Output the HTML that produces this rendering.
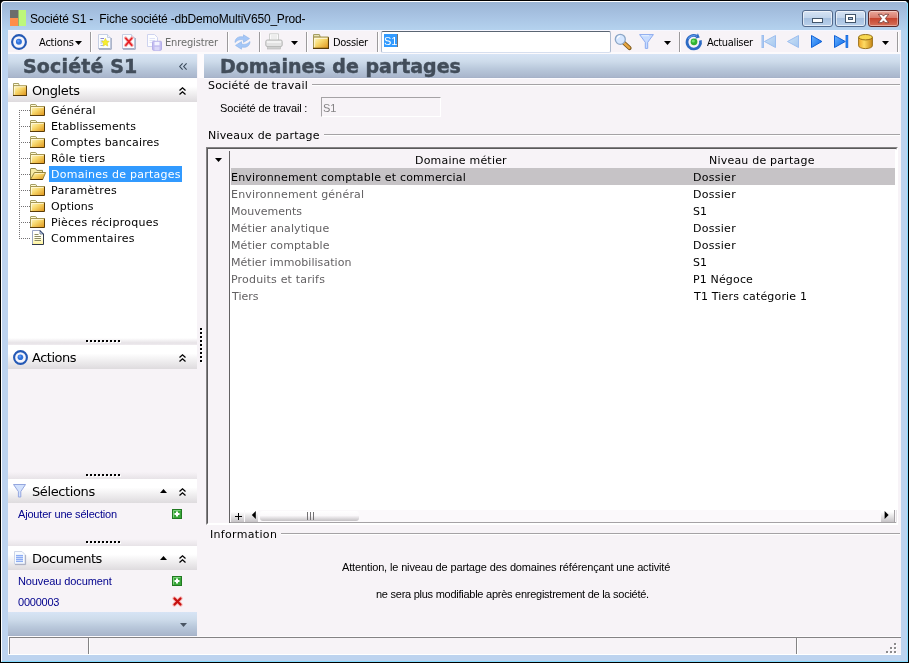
<!DOCTYPE html>
<html lang="fr">
<head>
<meta charset="utf-8">
<title>Société S1 - Fiche société</title>
<style>
html,body{margin:0;padding:0;}
body{width:909px;height:663px;overflow:hidden;background:#000;position:relative;font-family:"DejaVu Sans","Liberation Sans",sans-serif;font-size:11px;color:#000;}
.a{position:absolute;}
svg.a{overflow:visible;}
.t{position:absolute;white-space:nowrap;will-change:transform;}
</style>
</head>
<body>
<svg width="0" height="0" style="position:absolute">
<defs>
<linearGradient id="gf" x1="0" y1="0" x2="1" y2="1"><stop offset="0" stop-color="#fffbce"/><stop offset=".45" stop-color="#f7d76b"/><stop offset="1" stop-color="#de9218"/></linearGradient>
<linearGradient id="gdoc" x1="0" y1="0" x2="0" y2="1"><stop offset="0" stop-color="#fff"/><stop offset=".5" stop-color="#fffff0"/><stop offset="1" stop-color="#fff394"/></linearGradient>
<linearGradient id="gb" x1="0" y1="0" x2="1" y2="1"><stop offset="0" stop-color="#6bb2ff"/><stop offset="1" stop-color="#0869e7"/></linearGradient>
<linearGradient id="gbd" x1="0" y1="0" x2="1" y2="1"><stop offset="0" stop-color="#cee3f7"/><stop offset="1" stop-color="#a5c7ef"/></linearGradient>
</defs>
</svg>
<div class="a" style="left:0;top:0;width:909px;height:663px;box-sizing:border-box;border:1px solid #000;border-radius:5px 5px 0 0;background:linear-gradient(#9cb6d6 2px,#a8c3e3 15px,#b5d3ef 30px,#bdd3ef 56px,#bdd3ef 100%);"></div>
<div class="a" style="left:1px;top:1px;width:907px;height:661px;box-sizing:border-box;border:1px solid #fff;border-right-color:#84dbff;border-bottom-color:#84dbff;border-radius:4px 4px 0 0;"></div>
<svg class="a" style="left:10px;top:10px" width="16" height="16" viewBox="0 0 16 16"><rect width="8" height="8" fill="#6b6d6b"/><rect y="8" width="8" height="8" fill="#ff8e4a"/><rect x="8" width="8" height="16" fill="#bdf77b"/><rect x="8" width="1" height="16" fill="#84966b" opacity=".7"/></svg>
<div class="a" style="left:802px;top:10px;width:31px;height:17px;box-sizing:border-box;border:1px solid #52698c;border-radius:3px;background:linear-gradient(#d6e3f4 0%,#c2d5ec 45%,#a6c0e0 50%,#b9d0ea 100%);box-shadow:inset 0 0 0 1px rgba(255,255,255,.6);"></div>
<div class="a" style="left:835px;top:10px;width:31px;height:17px;box-sizing:border-box;border:1px solid #52698c;border-radius:3px;background:linear-gradient(#d6e3f4 0%,#c2d5ec 45%,#a6c0e0 50%,#b9d0ea 100%);box-shadow:inset 0 0 0 1px rgba(255,255,255,.6);"></div>
<div class="a" style="left:868px;top:10px;width:31px;height:17px;box-sizing:border-box;border:1px solid #5a2829;border-radius:3px;background:linear-gradient(#eaa99c 0%,#d97c6d 45%,#c6452f 50%,#d6705a 100%);box-shadow:inset 0 0 0 1px rgba(255,255,255,.4);"></div>
<svg class="a" style="left:802px;top:10px" width="97" height="17" viewBox="0 0 97 17"><rect x="10.5" y="8.5" width="10" height="4" fill="#fff" stroke="#42556b"/><rect x="43.5" y="4.5" width="10" height="8" fill="#fff" stroke="#42556b"/><rect x="46.5" y="7.5" width="4" height="2" fill="#a5bcd9" stroke="#42556b"/><path d="M76.300 4.300H80L81.500 6.200L83 4.300H86.700L83.400 8.500L86.700 12.700H83L81.500 10.800L80 12.700H76.300L79.600 8.500Z" fill="#fff" stroke="#6b3029" stroke-width=".8" stroke-linejoin="round"/></svg>
<div class="a" style="left:8px;top:30px;width:893px;height:625px;background:#f7f3f7;"></div>
<div class="a" style="left:8px;top:30px;width:893px;height:1px;background:#f7f7ff;"></div>
<div class="a" style="left:8px;top:52px;width:893px;height:2px;background:#fcfafc;"></div>
<svg class="a" style="left:11px;top:34px" width="16" height="16" viewBox="0 0 16 16"><circle cx="8" cy="8" r="6.9" fill="#f5f5fc" stroke="#2459b5" stroke-width="2.100"/><circle cx="7.9" cy="7.8" r="3.00" fill="#3173d9"/><circle cx="7.3" cy="7.1" r="1.36" fill="#5a96f7"/></svg>
<svg class="a" style="left:75px;top:41px" width="7" height="4" viewBox="0 0 7 4" preserveAspectRatio="none"><path d="M0 0H7L3.5 4Z" fill="#000"/></svg>
<div class="a" style="left:90px;top:32px;width:1px;height:20px;background:#9c9a9c;"></div><div class="a" style="left:91px;top:32px;width:1px;height:20px;background:#fff;"></div>
<svg class="a" style="left:98px;top:34px" width="14" height="16" viewBox="0 0 14 16"><path d="M.5 .5H9.5L12.5 3.5V14.5H.5Z" fill="#fbfdff" stroke="#c6cfe3"/> <path d="M9.5 .5V3.5H12.5" fill="#eef3fb" stroke="#c6cfe3"/> <path d="M1 15.300H13.300V4" fill="none" stroke="#9ca6bd"/><path d="M.5 14.500H12.500" stroke="#a5aec6"/><path d="M2.500 4.500H6" stroke="#8c8ace"/><path d="M2.500 7H5M2.500 9H4.500M2.500 11.500H5" stroke="#9cb2ef"/><path d="M7.400 4.400L8.600 7L11.200 7.300L9.300 9.200L9.800 12.100L7.400 10.700L5 12.100L5.500 9.200L3.600 7.300L6.200 7Z" fill="#f7ef31" stroke="#d6c618" stroke-width=".5"/></svg>
<svg class="a" style="left:122px;top:34px" width="14" height="16" viewBox="0 0 14 16"><path d="M.5 .5H9.5L12.5 3.5V14.5H.5Z" fill="#fbfdff" stroke="#c6cfe3"/> <path d="M9.5 .5V3.5H12.5" fill="#eef3fb" stroke="#c6cfe3"/> <path d="M1 15.300H13.300V4" fill="none" stroke="#9ca6bd"/><path d="M.5 14.500H12.500" stroke="#a5aec6"/><path d="M3.600 4L10 11.400M10 4L3.600 11.400" stroke="#f3a5a5" stroke-width="3.200" stroke-linecap="round"/><path d="M3.800 4.200L9.800 11.200M9.800 4.200L3.800 11.200" stroke="#e71c21" stroke-width="1.500" stroke-linecap="round"/></svg>
<svg class="a" style="left:146px;top:34px" width="16" height="16" viewBox="0 0 16 16"><path d="M1.5 .5H8.5L11.5 3.5V12.5H1.5Z" fill="#fdfdff" stroke="#ced3ef"/><path d="M3.5 4.5H9M3.5 6.5H9M3.5 8.5H7" stroke="#dee3f7"/><rect x="6.500" y="7.300" width="9" height="9" rx="1" fill="#c3bdf0" stroke="#b5aee9"/><rect x="8.500" y="7.800" width="5" height="3.500" fill="#f3f3ff"/><rect x="8.500" y="12.800" width="5" height="3.500" fill="#dad7f8"/></svg>
<div class="a" style="left:227px;top:32px;width:1px;height:20px;background:#9c9a9c;"></div><div class="a" style="left:228px;top:32px;width:1px;height:20px;background:#fff;"></div>
<svg class="a" style="left:234px;top:34px" width="17" height="16" viewBox="0 0 17 16"><path d="M1 8.5C1 4 5 1.8 9.5 3V.8L15.5 4.6L9.5 8.4V6C6 5 3.5 6 1 8.5Z" fill="#a5c7f7" stroke="#8cb2e7" stroke-width=".6"/><path d="M16 7.5C16 12 12 14.2 7.5 13V15.2L1.5 11.4L7.5 7.6V10C11 11 13.500 10 16 7.500Z" fill="#a5c7f7" stroke="#8cb2e7" stroke-width=".6"/></svg>
<div class="a" style="left:259px;top:32px;width:1px;height:20px;background:#9c9a9c;"></div><div class="a" style="left:260px;top:32px;width:1px;height:20px;background:#fff;"></div>
<svg class="a" style="left:265px;top:33px" width="18" height="17" viewBox="0 0 18 17"><path d="M4.5 7V.8H13.5V7" fill="#fbfbfb" stroke="#cecfce"/><path d="M6 3H12M6 5H12" stroke="#e0e0e0"/><rect x=".8" y="7" width="16.4" height="6.500" rx="1.5" fill="#e3e3e3" stroke="#b5b6b5"/><rect x="2" y="8.2" width="14" height="1.600" fill="#f7f7f7"/><rect x="2.5" y="13.5" width="13" height="2.500" fill="#cfcfcf" stroke="#b5b6b5" stroke-width=".6"/></svg>
<svg class="a" style="left:291px;top:41px" width="7" height="4" viewBox="0 0 7 4" preserveAspectRatio="none"><path d="M0 0H7L3.5 4Z" fill="#000"/></svg>
<div class="a" style="left:306px;top:32px;width:1px;height:20px;background:#9c9a9c;"></div><div class="a" style="left:307px;top:32px;width:1px;height:20px;background:#fff;"></div>
<svg class="a" style="left:313px;top:34px" width="16" height="15" viewBox="0 0 15 12" preserveAspectRatio="none"><path d="M.5 2.500V1Q.5 .5 1 .5H5.500Q6 .5 6.200 1L6.800 2.500Z" fill="#fffbd6" stroke="#a59e63"/><rect x=".5" y="2.500" width="14" height="9" fill="url(#gf)"/><path d="M.5 11.500V2.500H14.500" fill="none" stroke="#a59652"/><path d="M0 11.500H14.500V2.500" fill="none" stroke="#5a3c08"/><path d="M1.500 10.500V3.500H13.500" fill="none" stroke="#fffbe7" opacity=".7"/></svg>
<div class="a" style="left:377px;top:32px;width:1px;height:20px;background:#9c9a9c;"></div><div class="a" style="left:378px;top:32px;width:1px;height:20px;background:#fff;"></div>
<div class="a" style="left:381px;top:31px;width:230px;height:22px;box-sizing:border-box;border:1px solid;border-color:#5a6573 #adbace #d6dfef #adbace;border-radius:2px;background:#fff;"></div>
<div class="a" style="left:384px;top:34px;width:13px;height:13px;background:#319aff;"></div>
<div class="a" style="left:397px;top:34px;width:1px;height:13px;background:#737173;"></div>
<svg class="a" style="left:614px;top:33px" width="18" height="17" viewBox="0 0 18 17"><path d="M9.500 9.500L15.500 15" stroke="#7b5518" stroke-width="4.200" stroke-linecap="round"/><path d="M9.500 9.500L15.300 14.800" stroke="#e7a642" stroke-width="2.500" stroke-linecap="round"/><circle cx="6.300" cy="6.300" r="5" fill="#d6e7ff" stroke="#8ca6c6" stroke-width="1.300"/><path d="M3.300 5.500A3.200 3.200 0 0 1 6 3" fill="none" stroke="#fff" stroke-width="1.200"/></svg>
<svg class="a" style="left:639px;top:34px" width="15" height="15" viewBox="0 0 15 15"><path d="M.6 .6H14.400L8.700 8.300V14.400H6.300V8.300Z" fill="#c6dbff" stroke="#8caaef" stroke-linejoin="round"/><path d="M2.500 1.700H10" stroke="#e7f3ff"/></svg>
<svg class="a" style="left:664px;top:41px" width="7" height="4" viewBox="0 0 7 4" preserveAspectRatio="none"><path d="M0 0H7L3.5 4Z" fill="#000"/></svg>
<div class="a" style="left:679px;top:32px;width:1px;height:20px;background:#9c9a9c;"></div><div class="a" style="left:680px;top:32px;width:1px;height:20px;background:#fff;"></div>
<svg class="a" style="left:685px;top:33px" width="18" height="18" viewBox="0 0 18 18"><path d="M15.370 7.440A6.800 6.800 0 1 1 11.670 3.040" fill="none" stroke="#2d6bc4" stroke-width="2.700"/><path d="M12.900 .3L14.700 4.500L10.300 5.800Z" fill="#2d6bc4"/><path d="M3.300 6A6.800 6.800 0 0 1 10.500 2.700" fill="none" stroke="#5a96e7" stroke-width="1.200"/><circle cx="9" cy="8.800" r="3.400" fill="#31b231"/><circle cx="8.300" cy="8" r="1.600" fill="#6be36b"/></svg>
<svg class="a" style="left:761px;top:35px" width="15" height="13" viewBox="0 0 15 13"><rect x="1" y=".5" width="1.500" height="12" fill="#b5cfef" stroke="#9cbeef"/><path d="M14.500 .5V12.500L3.500 6.500Z" fill="url(#gbd)" stroke="#9cbeef"/></svg>
<svg class="a" style="left:787px;top:35px" width="12" height="13" viewBox="0 0 12 13"><path d="M11.500 .5V12.500L.5 6.500Z" fill="url(#gbd)" stroke="#9cbeef"/></svg>
<svg class="a" style="left:811px;top:35px" width="12" height="13" viewBox="0 0 12 13"><path d="M.5 .5V12.500L10.900 6.500Z" fill="url(#gb)" stroke="#1061d6"/></svg>
<svg class="a" style="left:834px;top:35px" width="15" height="13" viewBox="0 0 15 13"><path d="M.5 .5V12.500L11.300 6.500Z" fill="url(#gb)" stroke="#1061d6"/><rect x="12" y=".5" width="1.800" height="12" fill="#298aff" stroke="#1061d6" stroke-width=".8"/></svg>
<svg class="a" style="left:858px;top:34px" width="15" height="15" viewBox="0 0 15 15"><defs><linearGradient id="gcy" x1="0" y1="0" x2="1" y2="0"><stop offset="0" stop-color="#efa629"/><stop offset=".4" stop-color="#ffdb63"/><stop offset="1" stop-color="#c68618"/></linearGradient></defs><path d="M.6 3.200V11.800A6.900 2.800 0 0 0 14.400 11.800V3.200Z" fill="url(#gcy)" stroke="#94690f" stroke-width=".9"/><ellipse cx="7.500" cy="3.200" rx="6.900" ry="2.700" fill="#f7d752" stroke="#8c6510" stroke-width=".9"/></svg>
<svg class="a" style="left:882px;top:41px" width="7" height="4" viewBox="0 0 7 4" preserveAspectRatio="none"><path d="M0 0H7L3.5 4Z" fill="#000"/></svg>
<div class="a" style="left:897px;top:32px;width:1px;height:20px;background:#9c9a9c;"></div><div class="a" style="left:898px;top:32px;width:1px;height:20px;background:#fff;"></div>
<div class="a" style="left:8px;top:54px;width:189px;height:24px;background:linear-gradient(#d7e4f5 0%,#cedceb 30%,#b9c8db 62%,#a9b6cc 96%,#a3adc4 100%);"></div>
<svg class="a" style="left:179px;top:63px" width="8" height="7" viewBox="0 0 8 7"><path d="M3.600 .3L.7 3.500L3.600 6.700M7.600 .3L4.700 3.500L7.600 6.700" fill="none" stroke="#3a4a5a" stroke-width="1.100"/></svg>
<div class="a" style="left:8px;top:78px;width:189px;height:260px;background:#fff;"></div>
<div class="a" style="left:8px;top:78px;width:189px;height:24px;background:linear-gradient(#fff 0%,#fff 35%,#dedbde 100%);"></div>
<svg class="a" style="left:13px;top:83px" width="14" height="13" viewBox="0 0 15 12" preserveAspectRatio="none"><path d="M.5 2.500V1Q.5 .5 1 .5H5.500Q6 .5 6.200 1L6.800 2.500Z" fill="#fffbd6" stroke="#a59e63"/><rect x=".5" y="2.500" width="14" height="9" fill="url(#gf)"/><path d="M.5 11.500V2.500H14.500" fill="none" stroke="#a59652"/><path d="M0 11.500H14.500V2.500" fill="none" stroke="#5a3c08"/><path d="M1.500 10.500V3.500H13.500" fill="none" stroke="#fffbe7" opacity=".7"/></svg>
<svg class="a" style="left:179px;top:87px" width="7" height="8" viewBox="0 0 7 8" preserveAspectRatio="none"><path d="M.5 3.5L3.5 .8L6.5 3.5M.5 7.5L3.5 4.8L6.5 7.5" fill="none" stroke="#000" stroke-width="1.25"/></svg>
<div class="a" style="left:19px;top:110px;width:1px;height:129px;background:repeating-linear-gradient(180deg,#737173 0,#737173 1px,transparent 1px,transparent 2px);"></div>
<div class="a" style="left:21px;top:110px;width:9px;height:1px;background:repeating-linear-gradient(90deg,#737173 0,#737173 1px,transparent 1px,transparent 2px);"></div>
<svg class="a" style="left:30px;top:104px" width="15" height="12" viewBox="0 0 15 12" preserveAspectRatio="none"><path d="M.5 2.500V1Q.5 .5 1 .5H5.500Q6 .5 6.200 1L6.800 2.500Z" fill="#fffbd6" stroke="#a59e63"/><rect x=".5" y="2.500" width="14" height="9" fill="url(#gf)"/><path d="M.5 11.500V2.500H14.500" fill="none" stroke="#a59652"/><path d="M0 11.500H14.500V2.500" fill="none" stroke="#5a3c08"/><path d="M1.500 10.500V3.500H13.500" fill="none" stroke="#fffbe7" opacity=".7"/></svg>
<div class="a" style="left:21px;top:126px;width:9px;height:1px;background:repeating-linear-gradient(90deg,#737173 0,#737173 1px,transparent 1px,transparent 2px);"></div>
<svg class="a" style="left:30px;top:120px" width="15" height="12" viewBox="0 0 15 12" preserveAspectRatio="none"><path d="M.5 2.500V1Q.5 .5 1 .5H5.500Q6 .5 6.200 1L6.800 2.500Z" fill="#fffbd6" stroke="#a59e63"/><rect x=".5" y="2.500" width="14" height="9" fill="url(#gf)"/><path d="M.5 11.500V2.500H14.500" fill="none" stroke="#a59652"/><path d="M0 11.500H14.500V2.500" fill="none" stroke="#5a3c08"/><path d="M1.500 10.500V3.500H13.500" fill="none" stroke="#fffbe7" opacity=".7"/></svg>
<div class="a" style="left:21px;top:142px;width:9px;height:1px;background:repeating-linear-gradient(90deg,#737173 0,#737173 1px,transparent 1px,transparent 2px);"></div>
<svg class="a" style="left:30px;top:136px" width="15" height="12" viewBox="0 0 15 12" preserveAspectRatio="none"><path d="M.5 2.500V1Q.5 .5 1 .5H5.500Q6 .5 6.200 1L6.800 2.500Z" fill="#fffbd6" stroke="#a59e63"/><rect x=".5" y="2.500" width="14" height="9" fill="url(#gf)"/><path d="M.5 11.500V2.500H14.500" fill="none" stroke="#a59652"/><path d="M0 11.500H14.500V2.500" fill="none" stroke="#5a3c08"/><path d="M1.500 10.500V3.500H13.500" fill="none" stroke="#fffbe7" opacity=".7"/></svg>
<div class="a" style="left:21px;top:158px;width:9px;height:1px;background:repeating-linear-gradient(90deg,#737173 0,#737173 1px,transparent 1px,transparent 2px);"></div>
<svg class="a" style="left:30px;top:152px" width="15" height="12" viewBox="0 0 15 12" preserveAspectRatio="none"><path d="M.5 2.500V1Q.5 .5 1 .5H5.500Q6 .5 6.200 1L6.800 2.500Z" fill="#fffbd6" stroke="#a59e63"/><rect x=".5" y="2.500" width="14" height="9" fill="url(#gf)"/><path d="M.5 11.500V2.500H14.500" fill="none" stroke="#a59652"/><path d="M0 11.500H14.500V2.500" fill="none" stroke="#5a3c08"/><path d="M1.500 10.500V3.500H13.500" fill="none" stroke="#fffbe7" opacity=".7"/></svg>
<div class="a" style="left:21px;top:174px;width:9px;height:1px;background:repeating-linear-gradient(90deg,#737173 0,#737173 1px,transparent 1px,transparent 2px);"></div>
<div class="a" style="left:49px;top:166px;width:133px;height:16px;background:#319aff;"></div>
<svg class="a" style="left:30px;top:168px" width="16" height="12" viewBox="0 0 16 12" preserveAspectRatio="none"><path d="M.5 11V1Q.5 .5 1 .5H5.500L6.800 2.400H12.500V4.500" fill="#f7eba5" stroke="#948a4a"/><path d="M4.400 4.500H15.600L12.700 11.500H.5Z" fill="url(#gf)" stroke="#8c7a31" stroke-width=".9"/><path d="M.3 11.500H12.700" fill="none" stroke="#4a3008"/><path d="M5.200 5.500H14.300" fill="none" stroke="#fffbe7" opacity=".6"/></svg>
<div class="a" style="left:21px;top:190px;width:9px;height:1px;background:repeating-linear-gradient(90deg,#737173 0,#737173 1px,transparent 1px,transparent 2px);"></div>
<svg class="a" style="left:30px;top:184px" width="15" height="12" viewBox="0 0 15 12" preserveAspectRatio="none"><path d="M.5 2.500V1Q.5 .5 1 .5H5.500Q6 .5 6.200 1L6.800 2.500Z" fill="#fffbd6" stroke="#a59e63"/><rect x=".5" y="2.500" width="14" height="9" fill="url(#gf)"/><path d="M.5 11.500V2.500H14.500" fill="none" stroke="#a59652"/><path d="M0 11.500H14.500V2.500" fill="none" stroke="#5a3c08"/><path d="M1.500 10.500V3.500H13.500" fill="none" stroke="#fffbe7" opacity=".7"/></svg>
<div class="a" style="left:21px;top:206px;width:9px;height:1px;background:repeating-linear-gradient(90deg,#737173 0,#737173 1px,transparent 1px,transparent 2px);"></div>
<svg class="a" style="left:30px;top:200px" width="15" height="12" viewBox="0 0 15 12" preserveAspectRatio="none"><path d="M.5 2.500V1Q.5 .5 1 .5H5.500Q6 .5 6.200 1L6.800 2.500Z" fill="#fffbd6" stroke="#a59e63"/><rect x=".5" y="2.500" width="14" height="9" fill="url(#gf)"/><path d="M.5 11.500V2.500H14.500" fill="none" stroke="#a59652"/><path d="M0 11.500H14.500V2.500" fill="none" stroke="#5a3c08"/><path d="M1.500 10.500V3.500H13.500" fill="none" stroke="#fffbe7" opacity=".7"/></svg>
<div class="a" style="left:21px;top:222px;width:9px;height:1px;background:repeating-linear-gradient(90deg,#737173 0,#737173 1px,transparent 1px,transparent 2px);"></div>
<svg class="a" style="left:30px;top:216px" width="15" height="12" viewBox="0 0 15 12" preserveAspectRatio="none"><path d="M.5 2.500V1Q.5 .5 1 .5H5.500Q6 .5 6.200 1L6.800 2.500Z" fill="#fffbd6" stroke="#a59e63"/><rect x=".5" y="2.500" width="14" height="9" fill="url(#gf)"/><path d="M.5 11.500V2.500H14.500" fill="none" stroke="#a59652"/><path d="M0 11.500H14.500V2.500" fill="none" stroke="#5a3c08"/><path d="M1.500 10.500V3.500H13.500" fill="none" stroke="#fffbe7" opacity=".7"/></svg>
<div class="a" style="left:21px;top:238px;width:9px;height:1px;background:repeating-linear-gradient(90deg,#737173 0,#737173 1px,transparent 1px,transparent 2px);"></div>
<svg class="a" style="left:32px;top:230px" width="12" height="15" viewBox="0 0 12 15" preserveAspectRatio="none"><path d="M.5 .5H8L11.500 4V14.500H.5Z" fill="url(#gdoc)"/><path d="M.5 14.500V.5H8" fill="none" stroke="#9ca6c6"/><path d="M0 14.500H11.500V4" fill="none" stroke="#31384a"/><path d="M8 .3L11.700 4H8Z" fill="#42598c" stroke="#31415a" stroke-width=".6"/><path d="M8.600 2.200V3.400H9.800" fill="none" stroke="#e7efff" stroke-width=".8"/><path d="M2.500 4.500H6.500M2.500 6.500H9M2.500 8.500H9M2.500 10.500H9" stroke="#8c8a63"/></svg>
<div class="a" style="left:8px;top:338px;width:189px;height:7px;background:linear-gradient(#fff,#e7e3e7 70%,#efebef);"></div>
<div class="a" style="left:87px;top:341px;width:34px;height:2px;background:repeating-linear-gradient(90deg,#fff 0,#fff 2px,transparent 2px,transparent 4px);"></div><div class="a" style="left:86px;top:340px;width:34px;height:2px;background:repeating-linear-gradient(90deg,#000 0,#000 2px,transparent 2px,transparent 4px);"></div>
<div class="a" style="left:8px;top:345px;width:189px;height:24px;background:linear-gradient(#fff 0%,#fff 35%,#dedbde 100%);"></div>
<svg class="a" style="left:12.5px;top:349.5px" width="15.0" height="15.0" viewBox="0 0 15.0 15.0"><circle cx="7.5" cy="7.5" r="6.4" fill="#f5f5fc" stroke="#2459b5" stroke-width="2.100"/><circle cx="7.4" cy="7.3" r="2.81" fill="#3173d9"/><circle cx="6.8" cy="6.6" r="1.28" fill="#5a96f7"/></svg>
<svg class="a" style="left:179px;top:354px" width="7" height="8" viewBox="0 0 7 8" preserveAspectRatio="none"><path d="M.5 3.5L3.5 .8L6.5 3.5M.5 7.5L3.5 4.8L6.5 7.5" fill="none" stroke="#000" stroke-width="1.25"/></svg>
<div class="a" style="left:8px;top:472px;width:189px;height:7px;background:linear-gradient(#f7f3f7,#e7e3e7);"></div>
<div class="a" style="left:87px;top:475px;width:34px;height:2px;background:repeating-linear-gradient(90deg,#fff 0,#fff 2px,transparent 2px,transparent 4px);"></div><div class="a" style="left:86px;top:474px;width:34px;height:2px;background:repeating-linear-gradient(90deg,#000 0,#000 2px,transparent 2px,transparent 4px);"></div>
<div class="a" style="left:8px;top:479px;width:189px;height:24px;background:linear-gradient(#fff 0%,#fff 35%,#dedbde 100%);"></div>
<svg class="a" style="left:13px;top:484px" width="13" height="14" viewBox="0 0 13 14"><path d="M.5 .5H12.500L7.800 7.500V13H5.400V7.500Z" fill="#d3e2fd" stroke="#94a6de" stroke-linejoin="round"/></svg>
<svg class="a" style="left:160px;top:489px" width="7" height="4" viewBox="0 0 7 4"><path d="M0 4H7L3.500 0Z" fill="#000"/></svg>
<svg class="a" style="left:179px;top:488px" width="7" height="8" viewBox="0 0 7 8" preserveAspectRatio="none"><path d="M.5 3.5L3.5 .8L6.5 3.5M.5 7.5L3.5 4.8L6.5 7.5" fill="none" stroke="#000" stroke-width="1.25"/></svg>
<svg class="a" style="left:172px;top:509px" width="10" height="10" viewBox="0 0 10 10" preserveAspectRatio="none"><rect x=".5" y=".5" width="9" height="9" fill="#39a639" stroke="#217921"/> <path d="M1.5 8.5V1.5H8.5" fill="none" stroke="#7bd37b"/> <path d="M5 2.5V7.5M2.5 5H7.5" stroke="#fff" stroke-width="2"/></svg>
<div class="a" style="left:8px;top:539px;width:189px;height:7px;background:linear-gradient(#f7f3f7,#e7e3e7);"></div>
<div class="a" style="left:87px;top:542px;width:34px;height:2px;background:repeating-linear-gradient(90deg,#fff 0,#fff 2px,transparent 2px,transparent 4px);"></div><div class="a" style="left:86px;top:541px;width:34px;height:2px;background:repeating-linear-gradient(90deg,#000 0,#000 2px,transparent 2px,transparent 4px);"></div>
<div class="a" style="left:8px;top:546px;width:189px;height:24px;background:linear-gradient(#fff 0%,#fff 35%,#dedbde 100%);"></div>
<svg class="a" style="left:14px;top:551px" width="12" height="14" viewBox="0 0 12 14"><path d="M.5 .5H8L11 3.500V13H.5Z" fill="#f7fbff" stroke="#ccd5e8"/><rect x="2" y="3.800" width="7" height="7.400" fill="#c9d9fb"/><path d="M2 4.500H9M2 6.500H9M2 8.500H9M2 10.500H9" stroke="#8cacf3"/><path d="M1 13.600H11.600V4" fill="none" stroke="#a9aec0"/></svg>
<svg class="a" style="left:160px;top:556px" width="7" height="4" viewBox="0 0 7 4"><path d="M0 4H7L3.500 0Z" fill="#000"/></svg>
<svg class="a" style="left:179px;top:555px" width="7" height="8" viewBox="0 0 7 8" preserveAspectRatio="none"><path d="M.5 3.5L3.5 .8L6.5 3.5M.5 7.5L3.5 4.8L6.5 7.5" fill="none" stroke="#000" stroke-width="1.25"/></svg>
<svg class="a" style="left:172px;top:576px" width="10" height="10" viewBox="0 0 10 10" preserveAspectRatio="none"><rect x=".5" y=".5" width="9" height="9" fill="#39a639" stroke="#217921"/> <path d="M1.5 8.5V1.5H8.5" fill="none" stroke="#7bd37b"/> <path d="M5 2.5V7.5M2.5 5H7.5" stroke="#fff" stroke-width="2"/></svg>
<svg class="a" style="left:172px;top:596px" width="11" height="11" viewBox="0 0 11 11" preserveAspectRatio="none"><path d="M2.300 2.300L8.700 8.700M8.700 2.300L2.300 8.700" stroke="#f7b6b5" stroke-width="4" stroke-linecap="round"/> <path d="M2.500 2.500L8.500 8.500M8.500 2.500L2.500 8.500" stroke="#c61010" stroke-width="2.200" stroke-linecap="round"/></svg>
<div class="a" style="left:8px;top:612px;width:189px;height:24px;background:linear-gradient(#d7e4f5 0%,#cedceb 30%,#b9c8db 62%,#a9b6cc 96%,#a3adc4 100%);"></div>
<svg class="a" style="left:180px;top:623px" width="7" height="4" viewBox="0 0 7 4"><path d="M0 0H7L3.500 4Z" fill="#4a5563"/></svg>
<div class="a" style="left:201px;top:329px;width:2px;height:34px;background:repeating-linear-gradient(180deg,#fff 0,#fff 2px,transparent 2px,transparent 4px);"></div>
<div class="a" style="left:200px;top:328px;width:2px;height:34px;background:repeating-linear-gradient(180deg,#000 0,#000 2px,transparent 2px,transparent 4px);"></div>
<div class="a" style="left:198px;top:54px;width:6px;height:24px;background:#fdfbfd;"></div>
<div class="a" style="left:204px;top:54px;width:696px;height:24px;background:linear-gradient(#d7e4f5 0%,#cedceb 30%,#b9c8db 62%,#a9b6cc 96%,#a3adc4 100%);"></div>
<div class="a" style="left:204px;top:78px;width:696px;height:1px;background:#fcfbfe;"></div>
<div class="a" style="left:312px;top:84px;width:588px;height:1px;background:#a5a2a5;"></div>
<div class="a" style="left:312px;top:85px;width:588px;height:1px;background:#fff;"></div>
<div class="a" style="left:324px;top:134px;width:576px;height:1px;background:#a5a2a5;"></div>
<div class="a" style="left:324px;top:135px;width:576px;height:1px;background:#fff;"></div>
<div class="a" style="left:281px;top:533px;width:619px;height:1px;background:#a5a2a5;"></div>
<div class="a" style="left:281px;top:534px;width:619px;height:1px;background:#fff;"></div>
<div class="a" style="left:321px;top:97px;width:120px;height:20px;box-sizing:border-box;border:1px solid;border-color:#a5a2a5 #fff #fff #a5a2a5;background:#f7f3f7;"></div>
<div class="a" style="left:206px;top:147px;width:692px;height:378px;box-sizing:border-box;border:1px solid;border-color:#848284 #fff #fff #848284;background:#f7f3f7;"></div>
<div class="a" style="left:207px;top:148px;width:690px;height:376px;box-sizing:border-box;border:1px solid;border-color:#5a595a #e7e3e7 #e7e3e7 #5a595a;"></div>
<div class="a" style="left:230px;top:185px;width:666px;height:325px;background:#fff;"></div>
<div class="a" style="left:895px;top:150px;width:2px;height:360px;background:#fff;"></div>
<div class="a" style="left:229px;top:151px;width:1px;height:372px;background:#636163;"></div>
<div class="a" style="left:231px;top:168px;width:664px;height:17px;background:#c6c3c6;"></div>
<svg class="a" style="left:215px;top:158px" width="7" height="4" viewBox="0 0 7 4"><path d="M0 0H7L3.500 4Z" fill="#000"/></svg>
<div class="a" style="left:230px;top:510px;width:666px;height:12px;background:#fbf9fb;"></div>
<div class="a" style="left:230px;top:522px;width:666px;height:1px;background:#a5a2a5;"></div>
<div class="a" style="left:208px;top:523px;width:689px;height:2px;background:#fff;"></div>
<div class="a" style="left:231px;top:510px;width:13px;height:12px;background:linear-gradient(#fff 15%,#c6c3c6);"></div>
<div class="a" style="left:235px;top:516px;width:7px;height:1px;background:#000;"></div>
<div class="a" style="left:238px;top:513px;width:1px;height:7px;background:#000;"></div>
<div class="a" style="left:245px;top:510px;width:13px;height:12px;background:linear-gradient(#fff 15%,#c6c3c6);"></div>
<svg class="a" style="left:251px;top:511px" width="5" height="8" viewBox="0 0 5 8"><path d="M4.800 0V8L.8 4Z" fill="#000"/></svg>
<div class="a" style="left:260px;top:511px;width:99px;height:10px;border-radius:3px;background:linear-gradient(#fff 0%,#fbf9fb 45%,#c3c0c3 100%);"></div>
<div class="a" style="left:307px;top:512px;width:1px;height:8px;background:#737173;"></div>
<div class="a" style="left:310px;top:512px;width:1px;height:8px;background:#737173;"></div>
<div class="a" style="left:313px;top:512px;width:1px;height:8px;background:#737173;"></div>
<div class="a" style="left:881px;top:510px;width:13px;height:12px;background:linear-gradient(#fff 15%,#c6c3c6);"></div>
<div class="a" style="left:894px;top:510px;width:1px;height:12px;background:#a5a2a5;"></div>
<svg class="a" style="left:884px;top:511px" width="5" height="8" viewBox="0 0 5 8"><path d="M.6 0V8L4.600 4Z" fill="#000"/></svg>
<div class="a" style="left:8px;top:636px;width:893px;height:1px;background:#fdfbfd;"></div>
<div class="a" style="left:8px;top:637px;width:893px;height:1px;background:#848284;"></div>
<div class="a" style="left:8px;top:638px;width:893px;height:17px;background:#f7f3f7;"></div>
<div class="a" style="left:8px;top:654px;width:893px;height:1px;background:#fff;"></div>
<div class="a" style="left:8px;top:637px;width:1px;height:18px;background:#fff;"></div>
<div class="a" style="left:9px;top:638px;width:1px;height:16px;background:#848284;"></div>
<div class="a" style="left:88px;top:638px;width:1px;height:16px;background:#848284;"></div>
<div class="a" style="left:89px;top:638px;width:1px;height:16px;background:#fff;"></div>
<div class="a" style="left:796px;top:638px;width:1px;height:16px;background:#848284;"></div>
<div class="a" style="left:797px;top:638px;width:1px;height:16px;background:#fff;"></div>
<svg class="a" style="left:885px;top:642px" width="12" height="12" viewBox="0 0 12 12"><rect x="10" y="2" width="2" height="2" fill="#fff"/><rect x="9" y="1" width="2" height="2" fill="#8c8a8c"/><rect x="6" y="6" width="2" height="2" fill="#fff"/><rect x="5" y="5" width="2" height="2" fill="#8c8a8c"/><rect x="10" y="6" width="2" height="2" fill="#fff"/><rect x="9" y="5" width="2" height="2" fill="#8c8a8c"/><rect x="2" y="10" width="2" height="2" fill="#fff"/><rect x="1" y="9" width="2" height="2" fill="#8c8a8c"/><rect x="6" y="10" width="2" height="2" fill="#fff"/><rect x="5" y="9" width="2" height="2" fill="#8c8a8c"/><rect x="10" y="10" width="2" height="2" fill="#fff"/><rect x="9" y="9" width="2" height="2" fill="#8c8a8c"/></svg>
<div class="t" id="wtitle" style='left:30.30px;top:11.00px;font:normal 12px/16px "Liberation Sans","DejaVu Sans",sans-serif;color:#000;letter-spacing:-0.191px;'>Société S1 -  Fiche société -dbDemoMultiV650_Prod-</div>
<div class="t" id="ltitle" style='left:23.00px;top:55.00px;font:bold 19px/23px "DejaVu Sans","Liberation Sans",sans-serif;color:#424d5a;letter-spacing:0.156px;-webkit-text-stroke:0.45px #424d5a;'>Société S1</div>
<div class="t" id="rtitle" style='left:220.00px;top:55.00px;font:bold 19px/23px "DejaVu Sans","Liberation Sans",sans-serif;color:#424d5a;-webkit-text-stroke:0.45px #424d5a;'>Domaines de partages</div>
<div class="t" id="tbact" style='left:39.00px;top:35.00px;font:normal 11px/15px "DejaVu Sans Condensed","DejaVu Sans","Liberation Sans",sans-serif;color:#000;letter-spacing:-0.198px;'>Actions</div>
<div class="t" id="tbenr" style='left:164.80px;top:35.00px;font:normal 11px/15px "DejaVu Sans Condensed","DejaVu Sans","Liberation Sans",sans-serif;color:#6b6d6b;letter-spacing:-0.140px;'>Enregistrer</div>
<div class="t" id="tbdos" style='left:332.70px;top:35.00px;font:normal 11px/15px "DejaVu Sans Condensed","DejaVu Sans","Liberation Sans",sans-serif;color:#000;letter-spacing:-0.315px;'>Dossier</div>
<div class="t" id="tbs1" style='left:384.30px;top:34.00px;font:normal 11px/15px "Liberation Sans","DejaVu Sans",sans-serif;color:#fff;'>S1</div>
<div class="t" id="tbactu" style='left:706.80px;top:35.00px;font:normal 11px/15px "DejaVu Sans Condensed","DejaVu Sans","Liberation Sans",sans-serif;color:#000;letter-spacing:-0.342px;'>Actualiser</div>
<div class="t" id="h1" style='left:31.70px;top:82.00px;font:normal 13px/17px "DejaVu Sans","Liberation Sans",sans-serif;color:#000;letter-spacing:-0.374px;'>Onglets</div>
<div class="t" id="h2" style='left:32.00px;top:349.00px;font:normal 13px/17px "DejaVu Sans","Liberation Sans",sans-serif;color:#000;letter-spacing:-0.490px;'>Actions</div>
<div class="t" id="h3" style='left:31.70px;top:483.00px;font:normal 13px/17px "DejaVu Sans","Liberation Sans",sans-serif;color:#000;letter-spacing:-0.389px;'>Sélections</div>
<div class="t" id="h4" style='left:31.70px;top:550.00px;font:normal 13px/17px "DejaVu Sans","Liberation Sans",sans-serif;color:#000;letter-spacing:-0.473px;'>Documents</div>
<div class="t" id="tr0" style='left:50.60px;top:103.00px;font:normal 11px/15px "DejaVu Sans","Liberation Sans",sans-serif;color:#000;letter-spacing:0.198px;'>Général</div>
<div class="t" id="tr1" style='left:50.60px;top:119.00px;font:normal 11px/15px "DejaVu Sans","Liberation Sans",sans-serif;color:#000;letter-spacing:0.086px;'>Etablissements</div>
<div class="t" id="tr2" style='left:50.60px;top:135.00px;font:normal 11px/15px "DejaVu Sans","Liberation Sans",sans-serif;color:#000;letter-spacing:0.157px;'>Comptes bancaires</div>
<div class="t" id="tr3" style='left:50.60px;top:151.00px;font:normal 11px/15px "DejaVu Sans","Liberation Sans",sans-serif;color:#000;letter-spacing:0.264px;'>Rôle tiers</div>
<div class="t" id="tr4" style='left:50.60px;top:167.00px;font:normal 11px/15px "DejaVu Sans","Liberation Sans",sans-serif;color:#fff;letter-spacing:0.251px;'>Domaines de partages</div>
<div class="t" id="tr5" style='left:50.60px;top:183.00px;font:normal 11px/15px "DejaVu Sans","Liberation Sans",sans-serif;color:#000;letter-spacing:0.342px;'>Paramètres</div>
<div class="t" id="tr6" style='left:50.60px;top:199.00px;font:normal 11px/15px "DejaVu Sans","Liberation Sans",sans-serif;color:#000;'>Options</div>
<div class="t" id="tr7" style='left:50.60px;top:215.00px;font:normal 11px/15px "DejaVu Sans","Liberation Sans",sans-serif;color:#000;letter-spacing:0.272px;'>Pièces réciproques</div>
<div class="t" id="tr8" style='left:50.60px;top:231.00px;font:normal 11px/15px "DejaVu Sans","Liberation Sans",sans-serif;color:#000;letter-spacing:0.280px;'>Commentaires</div>
<div class="t" id="lk1" style='left:18.40px;top:507.00px;font:normal 11px/15px "Liberation Sans","DejaVu Sans",sans-serif;color:#00008c;letter-spacing:-0.183px;'>Ajouter une sélection</div>
<div class="t" id="lk2" style='left:17.70px;top:574.00px;font:normal 11px/15px "Liberation Sans","DejaVu Sans",sans-serif;color:#00008c;letter-spacing:-0.102px;'>Nouveau document</div>
<div class="t" id="lk3" style='left:17.70px;top:595.00px;font:normal 11px/15px "Liberation Sans","DejaVu Sans",sans-serif;color:#00008c;letter-spacing:-0.222px;'>0000003</div>
<div class="t" id="g1" style='left:207.60px;top:78.00px;font:normal 11px/15px "DejaVu Sans","Liberation Sans",sans-serif;color:#000;letter-spacing:0.198px;'>Société de travail</div>
<div class="t" id="g2" style='left:207.60px;top:128.00px;font:normal 11px/15px "DejaVu Sans","Liberation Sans",sans-serif;color:#000;letter-spacing:0.173px;'>Niveaux de partage</div>
<div class="t" id="g3" style='left:210.20px;top:527.00px;font:normal 11px/15px "DejaVu Sans","Liberation Sans",sans-serif;color:#000;letter-spacing:0.322px;'>Information</div>
<div class="t" id="lab" style='left:219.60px;top:101.00px;font:normal 11px/15px "Liberation Sans","DejaVu Sans",sans-serif;color:#000;letter-spacing:-0.162px;'>Société de travail :</div>
<div class="t" id="fld" style='left:323.00px;top:101.00px;font:normal 11px/15px "Liberation Sans","DejaVu Sans",sans-serif;color:#848284;'>S1</div>
<div class="t" id="ch1" style='left:415.40px;top:153.00px;font:normal 11px/15px "DejaVu Sans","Liberation Sans",sans-serif;color:#000;letter-spacing:0.194px;'>Domaine métier</div>
<div class="t" id="ch2" style='left:709.00px;top:153.00px;font:normal 11px/15px "DejaVu Sans","Liberation Sans",sans-serif;color:#000;letter-spacing:0.210px;'>Niveau de partage</div>
<div class="t" id="a0" style='left:230.60px;top:170.00px;font:normal 11px/15px "DejaVu Sans","Liberation Sans",sans-serif;color:#000;letter-spacing:0.188px;'>Environnement comptable et commercial</div>
<div class="t" id="a1" style='left:230.60px;top:187.00px;font:normal 11px/15px "DejaVu Sans","Liberation Sans",sans-serif;color:#636163;letter-spacing:0.190px;'>Environnement général</div>
<div class="t" id="a2" style='left:230.60px;top:204.00px;font:normal 11px/15px "DejaVu Sans","Liberation Sans",sans-serif;color:#636163;'>Mouvements</div>
<div class="t" id="a3" style='left:230.60px;top:221.00px;font:normal 11px/15px "DejaVu Sans","Liberation Sans",sans-serif;color:#636163;letter-spacing:0.105px;'>Métier analytique</div>
<div class="t" id="a4" style='left:230.60px;top:238.00px;font:normal 11px/15px "DejaVu Sans","Liberation Sans",sans-serif;color:#636163;letter-spacing:0.111px;'>Métier comptable</div>
<div class="t" id="a5" style='left:230.60px;top:255.00px;font:normal 11px/15px "DejaVu Sans","Liberation Sans",sans-serif;color:#636163;letter-spacing:0.056px;'>Métier immobilisation</div>
<div class="t" id="a6" style='left:230.60px;top:272.00px;font:normal 11px/15px "DejaVu Sans","Liberation Sans",sans-serif;color:#636163;letter-spacing:0.181px;'>Produits et tarifs</div>
<div class="t" id="a7" style='left:232.20px;top:289.00px;font:normal 11px/15px "DejaVu Sans","Liberation Sans",sans-serif;color:#636163;'>Tiers</div>
<div class="t" id="b0" style='left:692.50px;top:170.00px;font:normal 11px/15px "DejaVu Sans","Liberation Sans",sans-serif;color:#000;letter-spacing:0.280px;'>Dossier</div>
<div class="t" id="b1" style='left:692.50px;top:187.00px;font:normal 11px/15px "DejaVu Sans","Liberation Sans",sans-serif;color:#000;letter-spacing:0.280px;'>Dossier</div>
<div class="t" id="b2" style='left:692.50px;top:204.00px;font:normal 11px/15px "DejaVu Sans","Liberation Sans",sans-serif;color:#000;'>S1</div>
<div class="t" id="b3" style='left:692.50px;top:221.00px;font:normal 11px/15px "DejaVu Sans","Liberation Sans",sans-serif;color:#000;letter-spacing:0.280px;'>Dossier</div>
<div class="t" id="b4" style='left:692.50px;top:238.00px;font:normal 11px/15px "DejaVu Sans","Liberation Sans",sans-serif;color:#000;letter-spacing:0.280px;'>Dossier</div>
<div class="t" id="b5" style='left:692.50px;top:255.00px;font:normal 11px/15px "DejaVu Sans","Liberation Sans",sans-serif;color:#000;'>S1</div>
<div class="t" id="b6" style='left:692.50px;top:272.00px;font:normal 11px/15px "DejaVu Sans","Liberation Sans",sans-serif;color:#000;letter-spacing:0.149px;'>P1 Négoce</div>
<div class="t" id="b7" style='left:694.00px;top:289.00px;font:normal 11px/15px "DejaVu Sans","Liberation Sans",sans-serif;color:#000;letter-spacing:0.177px;'>T1 Tiers catégorie 1</div>
<div class="t" id="in1" style='left:341.80px;top:560.00px;font:normal 11px/15px "Liberation Sans","DejaVu Sans",sans-serif;color:#000;letter-spacing:-0.144px;'>Attention, le niveau de partage des domaines référençant une activité</div>
<div class="t" id="in2" style='left:375.60px;top:587.00px;font:normal 11px/15px "Liberation Sans","DejaVu Sans",sans-serif;color:#000;letter-spacing:-0.256px;'>ne sera plus modifiable après enregistrement de la société.</div>
</body>
</html>
